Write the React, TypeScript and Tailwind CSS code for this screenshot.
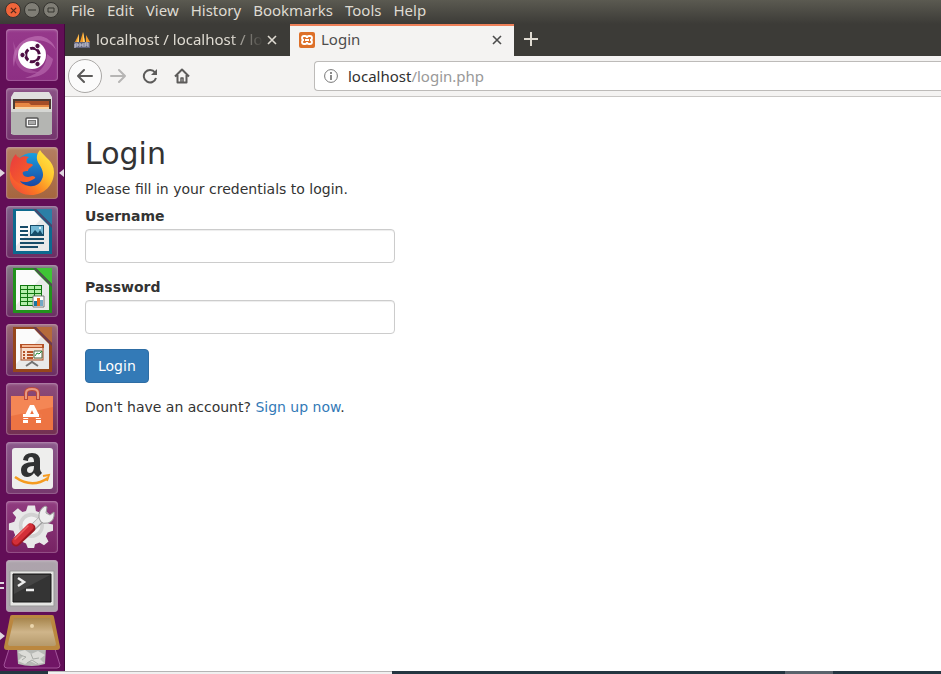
import type { ReactNode } from "react";

const menus = ["File", "Edit", "View", "History", "Bookmarks", "Tools", "Help"];

type Launcher = { name: string; tile: string; marks?: "both" | "double"; art: ReactNode };

function Paper({ color, fold }: { color: string; fold: string }) {
  return (
    <>
      <path d="M7 3H46V48H7Z" fill={color} />
      <path d="M10 5H28L43 20V45H10Z" fill="#e9e9e9" />
      <path d="M10 5H28L35 13 10 40Z" fill="#fbfbfb" />
      <path d="M30 3H46V19Z" fill={fold} />
      <path d="M27 3H30L46 19V22Z" fill="#5d3a62" opacity=".75" />
    </>
  );
}

const launchers: Launcher[] = [
  {
    name: "Search your computer",
    tile: "from-[#96398b] to-[#8d2f83]",
    art: (
      <>
        <path d="M8 38C4 22 14 8 32 7c9 0 16 7 18 14-6-9-17-12-26-8C12 18 9 28 8 38Z" fill="#d590ca" opacity=".45" />
        <path d="M47 30C45 43 34 49 19 49 30 45 40 41 41 25Z" fill="#d590ca" opacity=".4" />
        <path d="M7 12C13 27 16 42 34 43 22 47 12 41 9 31Z" fill="#c67abb" opacity=".35" />
        <circle cx="26" cy="26" r="14" fill="#fff" />
        <circle cx="26.500" cy="26" r="6.800" fill="none" stroke="#4d0d43" strokeWidth="3" strokeDasharray="12.200 2.040" strokeDashoffset="-1" />
        <g fill="#4d0d43" stroke="#fff" strokeWidth="1">
          <circle cx="16.500" cy="26" r="2.700" />
          <circle cx="31.500" cy="17" r="2.700" />
          <circle cx="31.500" cy="35" r="2.700" />
        </g>
      </>
    ),
  },
  {
    name: "Files",
    tile: "from-[#8b5286] to-[#74346d]",
    art: (
      <>
        <path d="M8 4H43L46 9V46H5V9Z" fill="#e0e0de" />
        <path d="M7 11H45V23H7Z" fill="#4c3b34" />
        <path d="M9 13H43V23H9Z" fill="#a44d27" />
        <path d="M9 15H23L25 17H43V23H9Z" fill="#e78743" />
        <path d="M9 19H43V23H9Z" fill="#f8d3a2" />
        <path d="M5 21H46V44Q46 47 43 47H8Q5 47 5 44Z" fill="#b4b5b2" />
        <path d="M5 21H46V24H5Z" fill="#d5d6d3" />
        <rect x="20" y="30" width="12" height="9" rx="1" fill="#fafafa" stroke="#555" strokeWidth="1.500" />
        <rect x="22.500" y="32.500" width="7" height="4" fill="#aaa" stroke="#777" />
      </>
    ),
  },
  {
    name: "Firefox",
    tile: "from-[#b47f62] to-[#a5653e]",
    marks: "both",
    art: (
      <>
        <defs>
          <linearGradient id="tail" x1="1" y1="0" x2="0" y2="1">
            <stop offset="0" stopColor="#fff04a" />
            <stop offset=".35" stopColor="#ffc52e" />
            <stop offset=".65" stopColor="#fb7a22" />
            <stop offset="1" stopColor="#f03a3f" />
          </linearGradient>
          <linearGradient id="head" x1="0" y1="0" x2="1" y2="1">
            <stop offset="0" stopColor="#e93a3f" />
            <stop offset="1" stopColor="#fb6a22" />
          </linearGradient>
          <linearGradient id="globe" x1="0" y1="0" x2="0" y2="1">
            <stop offset="0" stopColor="#19a0e0" />
            <stop offset="1" stopColor="#1b3f9c" />
          </linearGradient>
        </defs>
        <circle cx="26" cy="24" r="18" fill="url(#globe)" />
        <path d="M34 3c-4 5-4 9-1 14 4 6 5 11 3 15-2 5-7 8-13 7-8-1-13-6-15-14L5 20c-5 15 5 28 20 28 13 0 23-10 23-23 0-11-10-15-14-22Z" fill="url(#tail)" />
        <path d="M10 7c-4 4-6 10-6 17 2 9 8 14 18 15-4-1-7-3-8-5 4 2 9 1 12-1 2-1 4-2 3-3-3-2-4 0-7 0-4 0-6-3-5-5 1-1 3-1 5-1 0-3 4-4 5-6-1-2-4-1-6-2-1-2-1-4 2-6-4-1-7-1-9 1-2-1-4-2-4-4Z" fill="url(#head)" />
      </>
    ),
  },
  {
    name: "LibreOffice Writer",
    tile: "from-[#7d6088] to-[#6b2c63]",
    art: (
      <>
        <Paper color="#0d6a8f" fold="#2b7fa6" />
        <g fill="#174c69">
          <path d="M14 20h8v2h-8zM14 24h8v2h-8zM14 28h8v2h-8zM14 32h24v2H14zM14 36h24v2H14zM14 40h18v2H14z" />
          <path d="M24 19h14v11H24z" />
        </g>
        <path d="M25 20h12v8H25z" fill="#74b9d6" />
        <path d="m25 29 4-5 3 3 2-3 3 5Z" fill="#174c69" />
        <circle cx="34" cy="22" r="1" fill="#fff" />
      </>
    ),
  },
  {
    name: "LibreOffice Calc",
    tile: "from-[#817984] to-[#6b2c63]",
    art: (
      <>
        <Paper color="#22921d" fold="#3fc435" />
        <rect x="14" y="20" width="22" height="21" fill="#107610" />
        <g fill="#b4eeaa">
          <path d="M15 21h6v3h-6zM22 21h6v3h-6zM29 21h6v3h-6zM15 25h6v3h-6zM22 25h6v3h-6zM29 25h6v3h-6zM15 29h6v3h-6zM22 29h6v3h-6zM29 29h6v3h-6zM15 33h6v3h-6zM22 33h6v3h-6zM15 37h6v3h-6zM22 37h6v3h-6z" />
        </g>
        <path d="M27 31h11v11H27z" fill="#fff" stroke="#777" />
        <path d="M28 36h3v5h-3z" fill="#1675a1" />
        <path d="M31 33h3v8h-3z" fill="#e66b18" />
        <path d="M34 35h3v6h-3z" fill="#72a8c5" />
      </>
    ),
  },
  {
    name: "LibreOffice Impress",
    tile: "from-[#9a6a73] to-[#6b2c63]",
    art: (
      <>
        <Paper color="#96461c" fold="#b56a3a" />
        <rect x="15" y="21" width="22" height="15" fill="#f7dfd0" stroke="#a64b22" />
        <path d="M14 20h24v4H14zM17 27h2v2h-2zM21 27h6v2h-6zM17 30h2v2h-2zM21 30h6v2h-6zM17 33h2v2h-2zM21 33h6v2h-6z" fill="#b45228" />
        <path d="M16 21h20v2H16z" fill="#f3b795" />
        <path d="M28 27h8v7h-8z" fill="#fff" stroke="#4b6844" />
        <path d="m29 32 2-3 2 1 3-3" fill="none" stroke="#258d39" />
        <path d="M26 37v2m-6 3 6-4 6 4" fill="none" stroke="#747474" strokeWidth="2" />
      </>
    ),
  },
  {
    name: "Ubuntu Software",
    tile: "from-[#8e4d7e] to-[#722f50]",
    art: (
      <>
        <path d="M5 13H47V47H5Z" fill="#ed7443" />
        <path d="M5 13H47V24L5 33Z" fill="#f48655" />
        <path d="M20 17V10q0-4 6-4t6 4v7" fill="none" stroke="#bd4939" strokeWidth="4" />
        <path d="M20 16V10q0-4 6-4t6 4v6" fill="none" stroke="#e89a82" strokeWidth="2" />
        <path d="M24 22h4l7 14h-5l-4-9-4 9h-5Z" fill="#fff" />
        <path d="M16 31h20v4H16z" fill="#ee7747" />
        <path d="M17 31h16v3H17zM17 37h5v3h-5zM30 37h5v3h-5z" fill="#fff" />
      </>
    ),
  },
  {
    name: "Amazon",
    tile: "from-[#8b588b] to-[#76386e]",
    art: (
      <>
        <rect x="6" y="6" width="41" height="41" rx="3" fill="#eeeeed" />
        <path d="M17 18q1-7 9-7 8 0 8 8v8q0 2 2 4l-4 4q-3-2-4-4-3 4-7 4-6 0-6-7 0-8 13-8 0-5-3-5-3 0-3 4Zm11 6q-7 0-7 4 0 3 3 3 4 0 4-7Z" fill="#303132" />
        <path d="M9 35q17 12 33 1" fill="none" stroke="#f59b20" strokeWidth="2.600" />
        <path d="m37 34 6-1-2 6" fill="none" stroke="#f59b20" strokeWidth="1.800" />
      </>
    ),
  },
  {
    name: "System Settings",
    tile: "from-[#903c80] to-[#762263]",
    art: (
      <>
        <g transform="translate(2 1) scale(.9)">
          <path d="m22 4 8 0 1 6 5 2 5-3 5 5-3 6 2 4 5 1v7l-6 2-2 4 3 6-5 4-5-3-5 2-1 4h-7l-2-5-5-2-5 3-5-5 3-5-2-5-5-1v-7l6-2 2-5-4-5 6-5 5 4 4-1Z" fill="#e8e8e8" />
          <circle cx="26" cy="26" r="14" fill="#d2d2d2" />
          <circle cx="26" cy="26" r="10" fill="#f1f1f1" />
        </g>
        <path d="M22 31 37 17" stroke="#a3a3a3" strokeWidth="7" />
        <path d="M22 31 37 16" stroke="#e5e5e5" strokeWidth="5" />
        <path d="M33 17q-1-8 6-12l2 1-1 6 4 2 4-3q1 9-6 11-5 1-7-1Z" fill="#eee" stroke="#999" />
        <path d="m10 41 15-14" stroke="#9e1720" strokeWidth="9" strokeLinecap="round" />
        <path d="m10 40 14-14" stroke="#d32f38" strokeWidth="7" strokeLinecap="round" />
        <path d="m9 38 13-13" stroke="#ee5f60" strokeWidth="1.500" strokeLinecap="round" />
      </>
    ),
  },
  {
    name: "Terminal",
    tile: "from-[#ada3ac] to-[#aca5ab]",
    marks: "double",
    art: (
      <>
        <path d="M4 11H48V46H4Z" fill="#e6e6e4" stroke="#999" />
        <path d="M7 14H45V42H7Z" fill="#343434" stroke="#171717" />
        <path d="M8 15H44L8 34Z" fill="#555" opacity=".5" />
        <path d="m12 18 6 4-6 4M20 30h8" fill="none" stroke="#eee" strokeWidth="2.500" />
      </>
    ),
  },
];

function LauncherBar() {
  return (
    <nav aria-label="Launcher" className="flex w-[65px] shrink-0 flex-col items-center gap-[7px] border-r border-[#43083d] bg-[#620e57] pt-[5px]">
      {launchers.map((item) => (
        <div key={item.name} className="relative flex w-full justify-center">
          {item.marks === "both" && (
            <>
              <span className="absolute top-1/2 left-0 -translate-y-1/2 border-y-4 border-l-[5px] border-y-transparent border-l-[#e0d6df]" />
              <span className="absolute top-1/2 right-0 -translate-y-1/2 border-y-4 border-r-[5px] border-y-transparent border-r-[#e0d6df]" />
            </>
          )}
          {item.marks === "double" && (
            <span className="absolute top-[22px] left-0 h-[7px] w-1 border-y-2 border-[#e0d6df]" />
          )}
          <button aria-label={item.name} className={`size-[52px] rounded bg-linear-to-b ${item.tile} shadow-[inset_0_0_0_1px_#b783ae66,inset_0_1px_3px_#ffffff55]`}>
            <svg viewBox="0 0 52 52" className="size-full">{item.art}</svg>
          </button>
        </div>
      ))}
      <button aria-label="Trash" className="-mt-[5px] h-[56px] w-full">
        <svg viewBox="0 0 64 56" className="size-full">
          <defs>
            <linearGradient id="tray" x1="0" y1="0" x2="0" y2="1">
              <stop offset="0" stopColor="#a7854c" />
              <stop offset=".5" stopColor="#cfb58a" />
              <stop offset="1" stopColor="#b5996b" />
            </linearGradient>
          </defs>
          <path d="M0 18 5 22 0 26Z" fill="#e0d6df" />
          <path d="M10 32 4 51q0 3 3 3h50q3 0 3-3L54 32Z" fill="#701565" stroke="#a3549a" />
          <path d="M17 34h29l-1 16q-13 4-27 0Z" fill="#b7b9b5" />
          <path d="m18 38 7-2 6 4 7-3 7 4-5 4 4 4-8 1-6-3-5 3-7-3 5-5Z" fill="#dcdcd8" />
          <path d="m20 41 6 2-4 3m9-6 2 5 6-1m-12 5 5-3 6 4" fill="none" stroke="#a9aba7" />
          <path d="M12 1H52Q54 1 54 3L60 33Q60 36 57 36H7Q4 36 4 33L10 3Q10 1 12 1Z" fill="#bb873f" />
          <path d="M14 4H50L56 30Q56 32 54 32H10Q8 32 8 30Z" fill="url(#tray)" />
          <circle cx="32" cy="12" r="2" fill="#ead5ac" />
        </svg>
      </button>
    </nav>
  );
}

function CloseIcon() {
  return (
    <svg viewBox="0 0 10 10" className="size-[10px]" fill="none" stroke="currentColor" strokeWidth="1.600">
      <path d="m1 1 8 8M9 1 1 9" />
    </svg>
  );
}

function TitleBar() {
  return (
    <header className="flex h-6 shrink-0 items-center bg-linear-to-b from-[#5b5a51] to-[#3c3b37] pb-1 pl-[5px] text-[#dfdbd2]">
      <div className="flex w-[66px] gap-[3px]">
        <button aria-label="Close window" className="flex size-4 items-center justify-center rounded-full border border-[#353430] bg-[#f0653a] text-[#51291b]">
          <svg viewBox="0 0 8 8" className="size-[7px]" stroke="currentColor" strokeWidth="1.500"><path d="m1 1 6 6M7 1 1 7" /></svg>
        </button>
        <button aria-label="Minimize window" className="flex size-4 items-center justify-center rounded-full border border-[#353430] bg-[#807e76] text-[#35342f]">
          <svg viewBox="0 0 8 8" className="size-2" stroke="currentColor"><path d="M0 4h8" /></svg>
        </button>
        <button aria-label="Maximize window" className="flex size-4 items-center justify-center rounded-full border border-[#353430] bg-[#807e76] text-[#35342f]">
          <svg viewBox="0 0 8 8" className="size-2" fill="none" stroke="currentColor"><path d="M1 2h6v4H1Z" /></svg>
        </button>
      </div>
      <div role="menubar" className="flex gap-3 text-[15px] leading-5">
        {menus.map((menu) => (
          <button key={menu} role="menuitem">{menu}</button>
        ))}
      </div>
    </header>
  );
}

function TabStrip() {
  return (
    <div role="tablist" className="flex h-8 bg-[#3c3b37] text-[15px] leading-5 text-[#dfdbd2]">
      <div className="flex w-[225px] items-center pl-2">
        <svg viewBox="0 0 18 18" className="size-[18px] shrink-0">
          <path d="M2 11 6 3v8ZM7 11l3-10 2 10ZM13 11V4l4 7Z" fill="#f39a27" />
          <path d="M6 3v8H4ZM10 1l2 10h-2Z" fill="#ffce68" />
          <path d="M1 11h16v6H1Z" fill="#62647c" />
          <path d="M2 17v-4h3v2H2m5-3v4m0-2h3m0-2v4m2 0v-4h3v4m-3-2h3" fill="none" stroke="#c7c7d5" />
        </svg>
        <button role="tab" aria-selected="false" className="ml-[5px] min-w-0 flex-1 overflow-hidden mask-r-from-80% mask-r-to-100% pb-[2px] text-left whitespace-nowrap">
          localhost / localhost / lo
        </button>
        <button aria-label="Close tab" className="mr-[13px] ml-1"><CloseIcon /></button>
      </div>
      <div className="flex w-[224px] items-center border-t-2 border-[#ee8059] bg-[#f4f3f2] pb-[2px] pl-[9px] text-[#4c4c4c]">
        <svg viewBox="0 0 16 16" className="size-4 shrink-0">
          <rect width="16" height="16" rx="2" fill="#dd7029" />
          <path d="M5 4h1q2 0 2 2 0-2 2-2h1q2 0 2 2t-2 2q2 0 2 2t-2 2h-1q-2 0-2-2 0 2-2 2H5q-2 0-2-2t2-2q-2 0-2-2t2-2ZM6 8h4" fill="none" stroke="#fff" strokeWidth="1.800" />
        </svg>
        <button role="tab" aria-selected="true" className="ml-[6px] flex-1 pb-[2px] text-left">Login</button>
        <button aria-label="Close tab" className="mr-3"><CloseIcon /></button>
      </div>
      <button aria-label="New tab" className="pb-[2px] pl-[10px]">
        <svg viewBox="0 0 14 14" className="size-[14px]" stroke="currentColor" strokeWidth="2"><path d="M7 0v14M0 7h14" /></svg>
      </button>
    </div>
  );
}

function NavBar() {
  return (
    <div className="flex h-[41px] items-center border-b border-[#c9c7c5] bg-[#f4f3f2] pl-[3px] text-[#5c5b5a]">
      <div className="flex w-[246px] items-center">
        <button aria-label="Back" className="flex size-[34px] items-center justify-center rounded-full border border-[#aaa8a6] bg-[#fbfbfb]">
          <svg viewBox="0 0 16 16" className="size-4" fill="none" stroke="currentColor" strokeWidth="2" strokeLinecap="round" strokeLinejoin="round"><path d="M15 8H1m6-6L1 8l6 6" /></svg>
        </button>
        <button aria-label="Forward" className="ml-2 text-[#b6b5b4]">
          <svg viewBox="0 0 16 16" className="size-4" fill="none" stroke="currentColor" strokeWidth="2" strokeLinecap="round" strokeLinejoin="round"><path d="M1 8h14M9 2l6 6-6 6" /></svg>
        </button>
        <button aria-label="Reload" className="ml-4">
          <svg viewBox="0 0 16 16" className="size-4" fill="none" stroke="currentColor" strokeWidth="2"><path d="M13 4.500A6.200 6.200 0 1 0 14 10" /><path d="M15 1v6H9Z" fill="currentColor" stroke="none" /></svg>
        </button>
        <button aria-label="Home" className="ml-4">
          <svg viewBox="0 0 16 16" className="size-4" fill="none" stroke="currentColor" strokeWidth="2" strokeLinejoin="round"><path d="M1 8.500 8 1.500l7 7M3.500 7v7.500h9V7" /><path d="M7 14v-4h2v4" strokeWidth="1.500" /></svg>
        </button>
      </div>
      <div className="flex h-[30px] flex-1 items-center rounded-l border border-r-0 border-[#bdbbb9] bg-white pl-[9px] text-[15px]">
        <svg viewBox="0 0 14 14" className="size-[14px]" fill="none" stroke="#777"><circle cx="7" cy="7" r="6.400" /><path d="M7 6v5M7 3v2" strokeWidth="1.700" /></svg>
        <a href="#login" className="ml-[10px] text-[#303030]">localhost<span className="text-[#999]">/login.php</span></a>
      </div>
    </div>
  );
}

const labelClass = "mb-1 block font-bold";
const inputClass = "mb-[15px] block h-[34px] w-full rounded border border-[#ccc] bg-white px-3 shadow-[inset_0_1px_1px_rgba(0,0,0,0.075)]";

function LoginPage() {
  return (
    <main id="login" className="flex-1 bg-white font-['DejaVu_Sans',sans-serif] text-sm leading-[18px] text-[#333]">
      <form className="w-[350px] p-5" onSubmit={(event) => event.preventDefault()}>
        <h2 className="mt-5 mb-[10px] text-[30px] leading-[33px]">Login</h2>
        <p className="mb-[9px]">Please fill in your credentials to login.</p>
        <label htmlFor="username" className={labelClass}>Username</label>
        <input id="username" type="text" className={inputClass} />
        <label htmlFor="password" className={labelClass}>Password</label>
        <input id="password" type="password" className={inputClass} />
        <button type="submit" className="mb-[15px] block h-[34px] rounded border border-[#2e6da4] bg-[#337ab7] px-3 text-white">Login</button>
        <p>Don't have an account? <a href="#signup" className="text-[#337ab7]">Sign up now</a>.</p>
      </form>
    </main>
  );
}

export default function App() {
  return (
    <div className="flex min-h-screen flex-col overflow-hidden font-['Noto_Sans',sans-serif]">
      <TitleBar />
      <div className="flex flex-1">
        <LauncherBar />
        <div className="flex min-w-0 flex-1 flex-col">
          <TabStrip />
          <NavBar />
          <LoginPage />
        </div>
      </div>
      <footer className="flex h-[3px] shrink-0 bg-[#243641]">
        <div className="ml-12 w-[344px] border-t border-[#b5b5b5] bg-[#f0f0f0]" />
        <div className="mr-[108px] ml-auto w-12 bg-[#5a636c]" />
      </footer>
    </div>
  );
}
